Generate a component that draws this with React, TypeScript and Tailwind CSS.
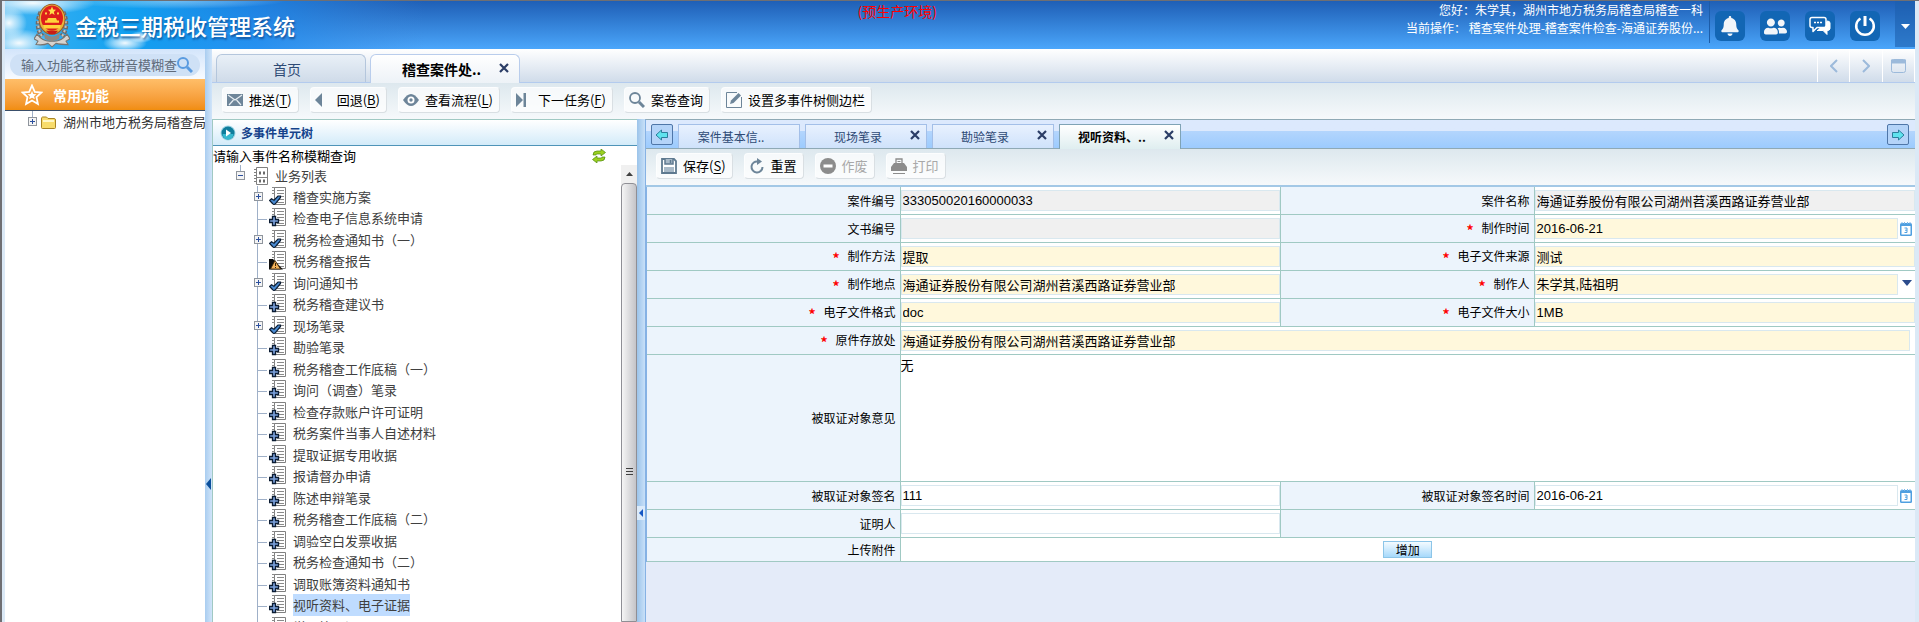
import { useState } from 'react';
import type { ReactNode } from 'react';
import { FaBell, FaUserFriends } from 'react-icons/fa';

type NodeState = 'done' | 'new' | 'warn';

const treeNodes: { name: string; state: NodeState; expandable?: boolean }[] = [
  { name: '稽查实施方案', state: 'done', expandable: true },
  { name: '检查电子信息系统申请', state: 'new' },
  { name: '税务检查通知书（一）', state: 'done', expandable: true },
  { name: '税务稽查报告', state: 'warn' },
  { name: '询问通知书', state: 'done', expandable: true },
  { name: '税务稽查建议书', state: 'new' },
  { name: '现场笔录', state: 'done', expandable: true },
  { name: '勘验笔录', state: 'new' },
  { name: '税务稽查工作底稿（一）', state: 'new' },
  { name: '询问（调查）笔录', state: 'new' },
  { name: '检查存款账户许可证明', state: 'new' },
  { name: '税务案件当事人自述材料', state: 'new' },
  { name: '提取证据专用收据', state: 'new' },
  { name: '报请督办申请', state: 'new' },
  { name: '陈述申辩笔录', state: 'new' },
  { name: '税务稽查工作底稿（二）', state: 'new' },
  { name: '调验空白发票收据', state: 'new' },
  { name: '税务检查通知书（二）', state: 'new' },
  { name: '调取账簿资料通知书', state: 'new' },
  { name: '视听资料、电子证据', state: 'new' },
  { name: '学习笔录证', state: 'new' },
];

const docTabs = [
  { name: '案件基本信..', closable: false },
  { name: '现场笔录', closable: true },
  { name: '勘验笔录', closable: true },
  { name: '视听资料、..', closable: true },
];

/* ---------- icons ---------- */

function Emblem() {
  return (
    <svg width="36" height="46" viewBox="0 0 36 40" preserveAspectRatio="none" aria-hidden="true">
      <path d="M7 9 Q1 20 8 30 M29 9 Q35 20 28 30" fill="none" stroke="#6e6a68" strokeWidth="5" strokeDasharray="3 1" />
      <path d="M7 9 Q1 20 8 30 M29 9 Q35 20 28 30" fill="none" stroke="#c9c4bd" strokeWidth="2" strokeDasharray="2 2" />
      <path d="M3 28 Q9 35 18 34 Q27 35 33 28 L36 32 L32 34 L34 37 Q26 37 22 36 L18 39 L14 36 Q9 38 2 37 L4 34 L0 32Z" fill="#d6d3cf" stroke="#77736f" />
      <path d="M10 27 Q18 33 26 27 L25 32 Q18 36 11 32Z" fill="#8d8984" />
      <circle cx="18" cy="15" r="13" fill="#e8b63c" stroke="#9c5a24" />
      <circle cx="18" cy="14" r="11" fill="#de1f1b" />
      <path d="M18 4l1.200 2.600 2.800.2-2.200 1.800.8 2.800-2.600-1.600-2.600 1.600.8-2.800L14 6.800l2.800-.2z" fill="#ffe14a" />
      <path d="M11 18h14v-2h-2l-1-2h-8l-1 2h-2zM9 20h18l-1 3H10z" fill="#ffd43a" />
      <circle cx="12" cy="10" r="1" fill="#ffe14a" />
      <circle cx="24" cy="10" r="1" fill="#ffe14a" />
      <path d="M12 25h12l-3 3h-6z" fill="#c81d16" />
    </svg>
  );
}

function SkyBackdrop() {
  return (
    <svg className="absolute inset-y-0 left-0 h-full w-[420px]" viewBox="0 0 420 48" preserveAspectRatio="none" aria-hidden="true">
      <defs>
        <linearGradient id="sky" x1="0" x2="1" y1="0" y2="0">
          <stop offset="0" stopColor="#3fb4f2" />
          <stop offset="0.3" stopColor="#11a0f0" />
          <stop offset="0.6" stopColor="#1c8bee" stopOpacity="0.75" />
          <stop offset="1" stopColor="#3a86da" stopOpacity="0" />
        </linearGradient>
        <radialGradient id="cloud">
          <stop offset="0" stopColor="#fff" stopOpacity="0.95" />
          <stop offset="0.5" stopColor="#e6f6ff" stopOpacity="0.6" />
          <stop offset="1" stopColor="#fff" stopOpacity="0" />
        </radialGradient>
      </defs>
      <rect width="420" height="48" fill="url(#sky)" />
      <ellipse cx="28" cy="2" rx="62" ry="12" fill="url(#cloud)" />
      <ellipse cx="4" cy="22" rx="18" ry="16" fill="url(#cloud)" />
      <ellipse cx="14" cy="42" rx="30" ry="14" fill="url(#cloud)" />
      <ellipse cx="120" cy="42" rx="22" ry="9" fill="url(#cloud)" />
      <ellipse cx="136" cy="36" rx="12" ry="6" fill="url(#cloud)" />
      <ellipse cx="170" cy="0" rx="110" ry="8" fill="url(#cloud)" opacity="0.4" />
    </svg>
  );
}

function ChatIcon() {
  return (
    <svg width="22" height="20" viewBox="0 0 22 20" aria-hidden="true">
      <path d="M8 14.500h6l4 4v-4q3 0 3-2V7q0-2-3-2" fill="#fff" stroke="#fff" strokeLinejoin="round" />
      <path d="M3 1.500h12q2 0 2 2v6q0 2-2 2H8l-4 4v-4H3q-2 0-2-2v-6q0-2 2-2z" fill="#1266b4" stroke="#fff" strokeWidth="1.500" strokeLinejoin="round" />
      <path d="M5 6.500h2M8 6.500h2M11 6.500h2" stroke="#fff" strokeWidth="1.500" />
    </svg>
  );
}

function PowerIcon() {
  return (
    <svg width="22" height="22" viewBox="0 0 22 22" fill="none" stroke="#fff" strokeWidth="2.500" aria-hidden="true">
      <path d="M6.500 3.500a8.800 8.800 0 1 0 9 0" />
      <path d="M11 1v10" strokeWidth="3" />
    </svg>
  );
}

function SearchIcon({ color }: { color: string }) {
  return (
    <svg width="16" height="16" viewBox="0 0 16 16" fill="none" stroke={color} aria-hidden="true">
      <circle cx="6" cy="6" r="5" strokeWidth="2" />
      <path d="M10 10l5 5" strokeWidth="3" />
    </svg>
  );
}

function StarIcon() {
  return (
    <svg width="22" height="22" viewBox="0 0 22 22" aria-hidden="true">
      <path d="M11 1.500l2.800 6.300 6.700.7-5 4.600 1.400 6.900-5.900-3.500L5.100 20l1.400-6.900-5-4.600 6.700-.7z" fill="none" stroke="#fff" strokeWidth="1.800" />
      <path d="M11 7l1.300 2.900 3.200.4-2.400 2 .7 3-2.800-1.600-2.800 1.600.7-3-2.400-2 3.200-.4z" fill="#fff" />
    </svg>
  );
}

function Expander({ open = false }: { open?: boolean }) {
  return (
    <>
      <rect x="0.500" y="6.500" width="8" height="8" fill="#f4f4f4" stroke="#8f959d" />
      <path d={open ? 'M2 10.500h5' : 'M2 10.500h5M4.500 8v5'} stroke="#2b4f9e" fill="none" />
    </>
  );
}

function FolderIcon() {
  return (
    <svg width="15" height="13" viewBox="0 0 15 13" aria-hidden="true">
      <path d="M.5 3q0-2 1-2h4l1.500 1.500h6q1.500 0 1.500 1.500v7.500q0 1-1 1H1.500q-1 0-1-1z" fill="#f8dc6c" stroke="#a98424" />
      <path d="M2 5h11" stroke="#fff7c8" strokeWidth="2" />
    </svg>
  );
}

function ListIcon() {
  return (
    <svg width="14" height="18" viewBox="0 0 14 18" fill="none" stroke="#808080" aria-hidden="true">
      <path d="M2.500 .5h11v17h-11zM0 2.500h3M0 5.500h3M0 8.500h3M0 11.500h3M0 14.500h3" />
      <path d="M5 6h2M9 6h2M5 14h2M9 14h2" stroke="#6a6a6a" strokeWidth="3" />
      <path d="M3 10.500h10" />
    </svg>
  );
}

function DocIcon({ state }: { state: NodeState }) {
  return (
    <svg width="17" height="20" viewBox="0 0 17 20" className="shrink-0" aria-hidden="true">
      <path d="M5.500 .5h11v17h-11z" fill="#fff" stroke="#808080" />
      <path d="M3 .5h3M3 3.500h3M3 6.500h3M8 3.500h7M8 6.500h7M8 9.500h7M8 12.500h7M8 15.500h7" stroke="#8a8a8a" />
      {state === 'done' && (
        <path d="M.6 13.500L2.500 11.700 5 13.200 9 9h2.500v1.500L6.500 16.500Q5 18.500 3.500 16.500z" fill="#4a8ad0" stroke="#0b1c33" strokeWidth="1.200" />
      )}
      {state === 'new' && (
        <path d="M3.500 8.500h3v3h3v3h-3v3h-3v-3h-3v-3h3z" fill="#7ba0dc" stroke="#0b1c33" strokeWidth="1.300" />
      )}
      {state === 'warn' && (
        <>
          <path d="M0 8h4l10 10.500H0z" fill="#0d0d0d" />
          <path d="M6 9.500l5.500 8.500H1.500z" fill="#f3b25a" stroke="#3a2408" strokeWidth="0.800" />
          <path d="M6.500 12v3M6.500 16v1" stroke="#3a2408" />
        </>
      )}
    </svg>
  );
}

function RefreshIcon() {
  return (
    <svg width="14" height="14" viewBox="0 0 14 14" aria-hidden="true">
      <path d="M1 6q0-4 4-4h4V0l4.500 3.500L9 7V5H5Q4 5 4 6z" fill="#9bd020" stroke="#4d8a0c" strokeWidth="0.700" />
      <path d="M13 8q0 4-4 4H5v2L.5 10.500 5 7v2h4q1 0 1-1z" fill="#9bd020" stroke="#4d8a0c" strokeWidth="0.700" />
    </svg>
  );
}

function PlayIcon() {
  return (
    <svg width="16" height="16" viewBox="0 0 16 16" aria-hidden="true">
      <circle cx="8" cy="8" r="7.500" fill="#9fd5e4" />
      <circle cx="8" cy="8" r="6.500" fill="#0e7d9c" />
      <path d="M2.500 9a5.500 5.500 0 0 0 11 0z" fill="#35b8cf" />
      <path d="M6 4.500v7L11 8z" fill="#fff" />
    </svg>
  );
}

function CloseIcon() {
  return (
    <svg width="10" height="10" viewBox="0 0 10 10" aria-hidden="true">
      <path d="M1 1l8 8M9 1L1 9" stroke="#2b3d66" strokeWidth="2.200" />
    </svg>
  );
}

function ArrowIcon({ flip = false }: { flip?: boolean }) {
  return (
    <svg width="14" height="12" viewBox="0 0 14 12" aria-hidden="true">
      <path
        d={flip ? 'M13 6L7.500 1v2.500h-6v5h6V11z' : 'M1 6l5.500-5v2.500h6v5h-6V11z'}
        fill="#5fe3ee"
        stroke="#2b7f9c"
        strokeLinejoin="round"
      />
    </svg>
  );
}

function CalendarIcon() {
  return (
    <svg width="12" height="14" viewBox="0 0 12 14" aria-hidden="true">
      <rect x="0" y="1" width="12" height="13" rx="1.500" fill="#4f9fe0" />
      <path d="M2 0v2M4.500 0v2M7.500 0v2M10 0v2" stroke="#7cb8ea" />
      <rect x="1.500" y="4" width="9" height="8.500" fill="#fff" />
      <path d="M4.500 6h2.500v4.500H4.500M5 8.200h2" stroke="#4f9fe0" fill="none" />
    </svg>
  );
}

const toolIcons: Record<string, ReactNode> = {
  send: (
    <>
      <rect x="0" y="2" width="16" height="12" fill="#6d8599" />
      <path d="M1 3l7 5 7-5M2 13l4.500-5M14 13L9.500 8" fill="none" stroke="#e6edf2" strokeWidth="1.200" />
    </>
  ),
  back: <path d="M7 1v14L0 8z" fill="#6d8599" />,
  eye: (
    <>
      <path d="M0 8q8-12 16 0-8 12-16 0z" fill="#6d8599" />
      <circle cx="8" cy="8" r="3.500" fill="#fff" />
      <circle cx="8" cy="8" r="1.700" fill="#6d8599" />
    </>
  ),
  next: <path d="M0 1l7 7-7 7zM7.500 1H10v14H7.500z" fill="#6d8599" />,
  find: (
    <g fill="none" stroke="#6d8599">
      <circle cx="6" cy="6" r="5" strokeWidth="1.800" />
      <path d="M10 10l5 5" strokeWidth="3" />
    </g>
  ),
  edit: (
    <>
      <path d="M15.500 5v10.500H.5V.5H11" fill="none" stroke="#6d8599" />
      <path d="M4 12l1-3.500L12.500 1 15 3.500 7.500 11z" fill="#6d8599" />
    </>
  ),
  save: (
    <>
      <path d="M1 1h12l2 2v12H1z" fill="#fff" stroke="#5f7a90" strokeWidth="1.800" />
      <path d="M4 1h8v5H4zM3 9h10v5H3z" fill="#a9bac8" />
      <path d="M4 1v5h8V1M9.500 2v3" fill="none" stroke="#5f7a90" strokeWidth="1.500" />
    </>
  ),
  reset: (
    <>
      <path d="M9 3.500A5.500 5.500 0 1 0 13.500 9" fill="none" stroke="#6d8599" strokeWidth="2" />
      <path d="M8 0l5 3.500L8 7z" fill="#6d8599" />
    </>
  ),
  discard: (
    <>
      <circle cx="8" cy="8" r="8" fill="#8c8c8c" />
      <rect x="3.500" y="6.500" width="9" height="3" fill="#fff" />
    </>
  ),
  print: (
    <>
      <path d="M5 5V1h6v4" fill="none" stroke="#8c8c8c" strokeWidth="1.300" />
      <path d="M6.500 3.500h3" stroke="#8c8c8c" />
      <path d="M3 5h10l3 4v4H0V9z" fill="#8c8c8c" />
      <path d="M2 15.500h12" stroke="#8c8c8c" />
    </>
  ),
};

/* ---------- small controls ---------- */

function ToolButton({ icon, label, hotkey, disabled = false }: { icon: string; label: string; hotkey?: string; disabled?: boolean }) {
  return (
    <button
      type="button"
      disabled={disabled}
      className="flex h-[26px] shrink-0 items-center gap-1.5 rounded-sm border border-t-white/60 border-r-[#d9dfe3] border-b-[#d9dfe3] border-l-white/60 bg-white/70 pr-1.5 pl-1 text-[13px] whitespace-nowrap text-black disabled:text-[#a8a8a8]"
    >
      <svg width="16" height="16" viewBox="0 0 16 16" aria-hidden="true">
        {toolIcons[icon]}
      </svg>
      <span>
        {label}
        {hotkey && (
          <>
            (<u className="underline-offset-2">{hotkey}</u>)
          </>
        )}
      </span>
    </button>
  );
}

function HeaderButton({ label, children }: { label: string; children: ReactNode }) {
  return (
    <button type="button" aria-label={label} className="flex size-[30px] items-center justify-center rounded-md bg-[#1266b4] text-[#f2f5f9]">
      {children}
    </button>
  );
}

function LabelCell({ id, text, required = false }: { id?: string; text: string; required?: boolean }) {
  return (
    <th className="border-r border-b border-[#a0c9c3] bg-[#ecf4fc] pr-1 text-right align-middle font-normal">
      {required && <span className="mr-2 align-[-3px] text-sm leading-none font-bold text-[#f00]">*</span>}
      <label htmlFor={id}>{text}</label>
    </th>
  );
}

const fieldTone = {
  readonly: 'bg-[#f0f0f0]',
  required: 'bg-[#fff8dc]',
  plain: 'bg-white',
};

function FieldCell({
  id,
  value,
  tone,
  trailing,
  last = false,
  span,
}: {
  id: string;
  value: string;
  tone: keyof typeof fieldTone;
  trailing?: 'date' | 'select';
  last?: boolean;
  span?: number;
}) {
  const box = `h-[21px] w-full min-w-0 appearance-none border border-[#d9e8ef] px-px text-[13px] leading-[18px] text-black outline-none ${fieldTone[tone]}`;
  return (
    <td colSpan={span} className={`border-b border-[#a0c9c3] bg-white p-0 align-middle ${last ? '' : 'border-r'} ${span ? 'pr-[5px]' : ''}`}>
      <div className="flex items-center font-['Liberation_Sans','Noto_Sans_CJK_SC',sans-serif]">
        {trailing === 'select' ? (
          <select id={id} defaultValue={value} className={box}>
            <option>{value}</option>
          </select>
        ) : (
          <input id={id} defaultValue={value} readOnly={tone === 'readonly'} className={box} />
        )}
        {trailing === 'date' && (
          <button type="button" aria-label="选择日期" className="w-[17px] shrink-0 pl-0.5">
            <CalendarIcon />
          </button>
        )}
        {trailing === 'select' && (
          <span className="w-[17px] shrink-0 pl-1">
            <svg width="10" height="6" viewBox="0 0 10 6" className="mb-1" aria-hidden="true">
              <path d="M0 0h10L5 6z" fill="#2c4c8c" />
            </svg>
          </span>
        )}
      </div>
    </td>
  );
}

/* ---------- page parts ---------- */

function Header() {
  return (
    <header className="relative flex h-12 shrink-0 justify-between overflow-hidden bg-linear-to-b from-[#1f5fb6] to-[#4ba6fb] text-white">
      <SkyBackdrop />
      <div className="relative flex w-[49%] justify-between pr-1 pl-[29px]">
        <div className="flex items-center gap-[5px]">
          <Emblem />
          <h1 className="text-[22px] leading-8 font-medium text-shadow-[1px_2px_2px_rgb(10_50_110_/_0.6)]">金税三期税收管理系统</h1>
        </div>
        <p className="text-sm text-[#f00]">(预生产环境)</p>
      </div>
      <div className="relative flex justify-end">
        <div className="flex h-[42px] border-r border-[#1c5ca8] pr-1.5 text-right text-xs leading-[18px]">
          <div>
            <p>您好：朱学其，湖州市地方税务局稽查局稽查一科</p>
            <p>当前操作： 稽查案件处理-稽查案件检查-海通证券股份...</p>
          </div>
        </div>
        <div className="flex gap-[15px] pt-2.5 pl-[5px]">
          <HeaderButton label="通知">
            <FaBell size={20} />
          </HeaderButton>
          <HeaderButton label="用户">
            <FaUserFriends size={23} />
          </HeaderButton>
          <HeaderButton label="消息">
            <ChatIcon />
          </HeaderButton>
          <HeaderButton label="退出">
            <PowerIcon />
          </HeaderButton>
        </div>
        <button type="button" aria-label="更多" className="ml-[15px] flex h-[46px] w-5 items-center justify-center bg-[#1d5fae]/60 pt-1">
          <svg width="9" height="5" viewBox="0 0 9 5" aria-hidden="true">
            <path d="M0 0h9L4.500 5z" fill="#fff" />
          </svg>
        </button>
      </div>
    </header>
  );
}

function Sidebar() {
  return (
    <aside className="flex w-[200px] shrink-0 flex-col bg-white text-[13px]">
      <div className="h-[30px] bg-linear-to-b from-[#d3e5fb] to-[#f8fbff] px-[5px] pt-[5px]">
        <div className="flex h-[22px] items-center rounded-full bg-[#cfe1f6] pr-[7px] pl-[11px]">
          <input
            aria-label="功能搜索"
            placeholder="输入功能名称或拼音模糊查"
            className="min-w-0 flex-1 text-[13px] leading-5 outline-none placeholder:text-[#5f6b7a]"
          />
          <SearchIcon color="#5a9be0" />
        </div>
      </div>
      <div className="flex h-8 items-center gap-2.5 border-b border-[#3a4f6b] bg-linear-to-b from-[#ffbe68] to-[#f18d0d] pl-4 text-sm font-bold text-white">
        <StarIcon />
        常用功能
      </div>
      <div className="flex h-[22px] items-center overflow-hidden pl-[23px] whitespace-nowrap text-[#333]">
        <svg width="9" height="22" viewBox="0 0 9 22" className="shrink-0" aria-hidden="true">
          <path d="M4.500 0v7" stroke="#9fb0c8" />
          <Expander />
        </svg>
        <span className="ml-1 shrink-0">
          <FolderIcon />
        </span>
        <a href="#bureau" className="ml-[7px]">
          湖州市地方税务局稽查局
        </a>
      </div>
    </aside>
  );
}

function MainTabs() {
  return (
    <nav className="flex h-[34px] shrink-0 items-end border-b border-[#b3cbee] bg-linear-to-b from-white to-[#d0dcea] pl-1">
      <a href="#home" className="flex h-7 w-[150px] items-center justify-center rounded-t-md border border-b-0 border-[#b4c6dc] bg-linear-to-b from-[#e9f0f7] to-[#cfdbe9] pr-2 text-sm text-[#2e4a75]">
        首页
      </a>
      <div className="ml-1 -mb-px flex h-[29px] w-[150px] items-center rounded-t-md border border-b-0 border-[#b9cdec] bg-linear-to-b from-white to-[#edf2f7] pl-[31px]">
        <a href="#case" className="text-sm font-bold text-black">
          稽查案件处..
        </a>
        <button type="button" aria-label="关闭" className="mr-2.5 mb-0.5 ml-auto">
          <CloseIcon />
        </button>
      </div>
      <div className="ml-auto flex h-[33px] text-[#9cbadb]">
        <button type="button" aria-label="上一个" className="flex w-8 items-center justify-center border-l border-white">
          <svg width="8" height="14" viewBox="0 0 8 14" fill="none" stroke="currentColor" strokeWidth="2" aria-hidden="true">
            <path d="M7 1L1 7l6 6" />
          </svg>
        </button>
        <button type="button" aria-label="下一个" className="flex w-[33px] items-center justify-center border-l border-white">
          <svg width="8" height="14" viewBox="0 0 8 14" fill="none" stroke="currentColor" strokeWidth="2" aria-hidden="true">
            <path d="M1 1l6 6-6 6" />
          </svg>
        </button>
        <button type="button" aria-label="窗口" className="flex w-[33px] items-center justify-center border-x border-white">
          <svg width="15" height="14" viewBox="0 0 15 14" fill="none" stroke="currentColor" aria-hidden="true">
            <rect x="0.500" y="0.500" width="14" height="13" rx="2" />
            <path d="M0 2.500h15" strokeWidth="4" />
          </svg>
        </button>
      </div>
    </nav>
  );
}

function EventTree() {
  const [selected, setSelected] = useState('视听资料、电子证据');

  return (
    <section className="flex w-[425px] shrink-0 flex-col overflow-hidden border-t border-l border-[#a0c9c3] bg-white">
      <h2 className="flex h-[26px] shrink-0 items-center gap-[5px] border-b border-[#4f94b8] bg-linear-to-b from-white to-[#d3ebf9] pl-[7px] text-xs font-bold text-[#15428b]">
        <PlayIcon />
        多事件单元树
      </h2>
      <div className="flex h-[19px] shrink-0 items-center justify-between pr-[31px] text-[13px]">
        <span>请输入事件名称模糊查询</span>
        <button type="button" aria-label="刷新">
          <RefreshIcon />
        </button>
      </div>
      <div className="flex min-h-0 flex-1">
        <div className="min-w-0 flex-1 overflow-hidden text-[13px] text-[#404040]">
          <div className="flex h-[21px] items-center overflow-hidden pl-[23px]">
            <svg width="9" height="22" viewBox="0 0 9 22" aria-hidden="true">
              <path d="M4.500 0v7" stroke="#9fb0c8" />
              <Expander open />
            </svg>
            <span className="ml-[9px]">
              <ListIcon />
            </span>
            <span className="ml-[7px]">业务列表</span>
          </div>
          <ul>
            {treeNodes.map((node) => (
              <li key={node.name} className="flex items-center overflow-hidden pl-[41px] odd:h-[21px] even:h-[22px]">
                <svg width="15" height="22" viewBox="0 0 15 22" className="shrink-0" aria-hidden="true">
                  <path d={node.expandable ? 'M3.500 0v22' : 'M3.500 0v22M3 12.500h10'} stroke="#9fb0c8" fill="none" />
                  {node.expandable && <Expander />}
                </svg>
                <DocIcon state={node.state} />
                <button
                  type="button"
                  onClick={() => setSelected(node.name)}
                  className={`ml-[7px] leading-[22px] ${selected === node.name ? 'bg-[#bfdcff]' : ''}`}
                >
                  {node.name}
                </button>
              </li>
            ))}
          </ul>
        </div>
        <div className="flex w-4 shrink-0 flex-col bg-[#f0f0f0]" aria-hidden="true">
          <div className="flex h-[18px] shrink-0 items-center justify-center">
            <svg width="7" height="4" viewBox="0 0 7 4">
              <path d="M0 4h7L3.500 0z" fill="#404040" />
            </svg>
          </div>
          <div className="flex-1 rounded-t-sm border border-[#8f8f95] bg-linear-to-r from-[#f5f5f5] to-[#c4c4c8] pt-[284px] pl-1">
            <svg width="7" height="8" viewBox="0 0 7 8">
              <path d="M0 .5h7M0 3.500h7M0 6.500h7" stroke="#404040" />
            </svg>
          </div>
        </div>
      </div>
    </section>
  );
}

function DocTabs() {
  const [active, setActive] = useState('视听资料、..');
  const arrowBox = 'mb-[3px] flex h-[21px] w-[22px] items-center justify-center rounded-xs border border-[#4f76a8] bg-[#b4d3f8]';

  return (
    <div className="flex h-[29px] shrink-0 items-end border-b border-[#8fa9b5] bg-linear-to-b from-[#dce9fd] from-40% via-[#b3d5fd] via-40% to-[#9ccbfe] pr-1.5 pl-[5px]">
      <button type="button" aria-label="向左" className={`${arrowBox} mr-[5px]`}>
        <ArrowIcon />
      </button>
      <div className="flex items-end gap-[5px]">
        {docTabs.map((tab) => (
          <div
            key={tab.name}
            className={
              tab.name === active
                ? '-mb-px flex h-[25px] w-[122px] items-center border border-b-0 border-[#7fa3b5] bg-linear-to-b from-white to-[#dfeef0] font-bold text-black'
                : 'flex h-6 w-[122px] items-center border border-b-0 border-[#a3bfe8] bg-linear-to-b from-[#e8f1fe] to-[#cfe2fb] text-[#2e4a75]'
            }
          >
            <button type="button" onClick={() => setActive(tab.name)} className="flex-1 text-xs">
              {tab.name}
            </button>
            {tab.closable ? (
              <button type="button" aria-label="关闭" className="mr-1.5 mb-1">
                <CloseIcon />
              </button>
            ) : (
              <span className="w-4" />
            )}
          </div>
        ))}
      </div>
      <button type="button" aria-label="向右" className={`${arrowBox} ml-auto`}>
        <ArrowIcon flip />
      </button>
    </div>
  );
}

function EvidenceForm() {
  return (
    <table className="w-full table-fixed border-separate border-spacing-0 text-xs text-black">
      <colgroup>
        <col className="w-[20%]" />
        <col className="w-[30%]" />
        <col className="w-[20%]" />
        <col className="w-[30%]" />
      </colgroup>
      <tbody>
        <tr className="h-7">
          <LabelCell id="caseNo" text="案件编号" />
          <FieldCell id="caseNo" value="333050020160000033" tone="readonly" />
          <LabelCell id="caseName" text="案件名称" />
          <FieldCell id="caseName" value="海通证券股份有限公司湖州苕溪西路证券营业部" tone="readonly" last />
        </tr>
        <tr className="h-7">
          <LabelCell id="docNo" text="文书编号" />
          <FieldCell id="docNo" value="" tone="readonly" />
          <LabelCell id="madeAt" text="制作时间" required />
          <FieldCell id="madeAt" value="2016-06-21" tone="required" trailing="date" last />
        </tr>
        <tr className="h-7">
          <LabelCell id="method" text="制作方法" required />
          <FieldCell id="method" value="提取" tone="required" />
          <LabelCell id="source" text="电子文件来源" required />
          <FieldCell id="source" value="测试" tone="required" last />
        </tr>
        <tr className="h-7">
          <LabelCell id="place" text="制作地点" required />
          <FieldCell id="place" value="海通证券股份有限公司湖州苕溪西路证券营业部" tone="required" />
          <LabelCell id="maker" text="制作人" required />
          <FieldCell id="maker" value="朱学其,陆祖明" tone="required" trailing="select" last />
        </tr>
        <tr className="h-7">
          <LabelCell id="format" text="电子文件格式" required />
          <FieldCell id="format" value="doc" tone="required" />
          <LabelCell id="size" text="电子文件大小" required />
          <FieldCell id="size" value="1MB" tone="required" last />
        </tr>
        <tr className="h-7">
          <LabelCell id="storage" text="原件存放处" required />
          <FieldCell id="storage" value="海通证券股份有限公司湖州苕溪西路证券营业部" tone="required" span={3} last />
        </tr>
        <tr>
          <LabelCell id="opinion" text="被取证对象意见" />
          <td colSpan={3} className="border-b border-[#a0c9c3] bg-white p-0">
            <textarea id="opinion" defaultValue="无" className="block h-[126px] w-full resize-none text-[13px] leading-5 outline-none" />
          </td>
        </tr>
        <tr className="h-7">
          <LabelCell id="signer" text="被取证对象签名" />
          <FieldCell id="signer" value="111" tone="plain" />
          <LabelCell id="signedAt" text="被取证对象签名时间" />
          <FieldCell id="signedAt" value="2016-06-21" tone="plain" trailing="date" last />
        </tr>
        <tr className="h-7">
          <LabelCell id="witness" text="证明人" />
          <FieldCell id="witness" value="" tone="plain" />
          <td colSpan={2} className="border-b border-[#a0c9c3] bg-[#ecf4fc]" />
        </tr>
        <tr className="h-6">
          <LabelCell id="attach" text="上传附件" />
          <td colSpan={3} className="border-b border-[#a0c9c3] bg-white p-0 text-center align-middle">
            <button id="attach" type="button" className="mx-auto block h-[17px] w-[49px] border border-[#8cc5e8] bg-linear-to-b from-[#f4fbff] to-[#a6d9fb] text-xs leading-[15px] text-black">
              增加
            </button>
          </td>
        </tr>
      </tbody>
    </table>
  );
}

export default function App() {
  return (
    <div className="flex h-screen flex-col overflow-hidden border-t border-l-2 border-[#6f6f73] bg-[#dbe9f6] pr-1 pl-[3px] font-['Noto_Sans_CJK_SC',sans-serif] text-black">
      <Header />
      <div className="flex min-h-0 flex-1">
        <Sidebar />
        <div className="w-[7px] shrink-0 bg-linear-to-r from-[#a9cdf0] to-[#d0e4f9] pt-[429px] pl-px">
          <svg width="5" height="12" viewBox="0 0 5 12" className="block" aria-hidden="true">
            <path d="M5 0v12L0 6z" fill="#0b4f9c" />
          </svg>
        </div>
        <main className="flex min-w-0 flex-1 flex-col">
          <MainTabs />
          <div className="flex h-9 shrink-0 items-start gap-[11px] bg-linear-to-b from-[#dde8ee] to-[#f6f9fb] pt-1 pl-[10px]">
            <ToolButton icon="send" label="推送" hotkey="T" />
            <ToolButton icon="back" label="回退" hotkey="B" />
            <ToolButton icon="eye" label="查看流程" hotkey="L" />
            <ToolButton icon="next" label="下一任务" hotkey="F" />
            <ToolButton icon="find" label="案卷查询" />
            <ToolButton icon="edit" label="设置多事件树侧边栏" />
          </div>
          <div className="flex min-h-0 flex-1">
            <EventTree />
            <div className="w-2 shrink-0 bg-linear-to-r from-[#9cc4ea] to-[#c8e0f8] pt-[387px]">
              <div className="flex h-[14px] items-center justify-center bg-[#dcebfa]">
                <svg width="4" height="8" viewBox="0 0 4 8" aria-hidden="true">
                  <path d="M4 0v8L0 4z" fill="#1657c4" />
                </svg>
              </div>
            </div>
            <section className="flex min-w-0 flex-1 flex-col border-t border-l border-[#8fa9b5] border-l-[#86b2e4] bg-[#e4ebf9]">
              <DocTabs />
              <div className="flex h-[38px] shrink-0 items-start gap-[11px] border-b-2 border-[#a3c8e6] bg-linear-to-b from-[#dde8ee] to-[#f6f9fb] pt-1 pl-2.5">
                <ToolButton icon="save" label="保存" hotkey="S" />
                <ToolButton icon="reset" label="重置" />
                <ToolButton icon="discard" label="作废" disabled />
                <ToolButton icon="print" label="打印" disabled />
              </div>
              <div className="border-l border-[#86b2e4]">
                <EvidenceForm />
              </div>
            </section>
          </div>
        </main>
      </div>
    </div>
  );
}
